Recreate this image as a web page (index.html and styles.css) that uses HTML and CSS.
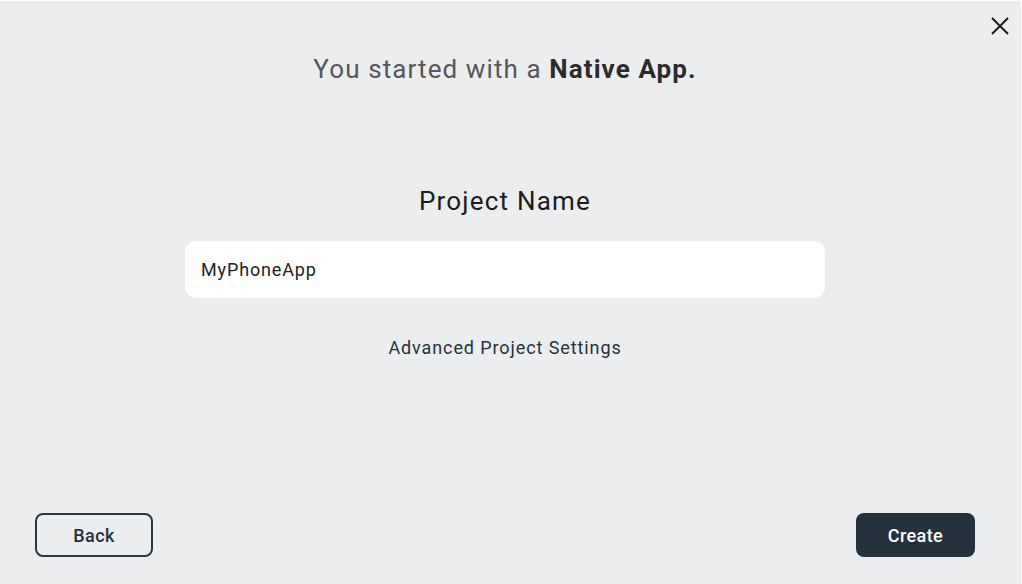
FILE: index.html
```html
<!DOCTYPE html>
<html>
<head>
<meta charset="utf-8">
<link rel="stylesheet" href="styles.css">
</head>
<body>
<div class="dialog">
  <button class="close" aria-label="Close">
    <svg width="20" height="20" viewBox="0 0 20 20"><path d="M2 2 L18 18 M18 2 L2 18" stroke="#1b1b1b" stroke-width="2" fill="none"/></svg>
  </button>
  <h1 class="title">You started with a <strong>Native App.</strong></h1>
  <div class="form">
    <h2 class="label">Project Name</h2>
    <div class="input">MyPhoneApp</div>
    <a class="advanced">Advanced Project Settings</a>
  </div>
  <div class="footer">
    <button class="btn btn-back">Back</button>
    <button class="btn btn-create">Create</button>
  </div>
</div>
</body>
</html>
```
FILE: styles.css
```css
* { box-sizing: border-box; }
html, body { margin: 0; padding: 0; }
body {
  width: 1022px;
  height: 584px;
  background: #ffffff;
  font-family: Roboto, "Liberation Sans", sans-serif;
  overflow: hidden;
}
.dialog {
  position: relative;
  width: 1021px;
  height: 584px;
  margin-top: 1px;
  padding-right: 11px;
  background: #ecedef;
  display: flex;
  flex-direction: column;
  align-items: center;
}
.close {
  position: absolute;
  top: 15px;
  right: 11px;
  width: 20px;
  height: 20px;
  padding: 0;
  border: none;
  background: none;
}
.close svg { display: block; }
.title {
  margin: 50px 0 0;
  font-size: 26px;
  font-weight: 400;
  line-height: 36px;
  color: #555759;
  letter-spacing: 1.1px;
}
.title strong { font-weight: 700; color: #2b2b2b; }
.form {
  margin-top: 96px;
  display: flex;
  flex-direction: column;
  align-items: center;
}
.label {
  margin: 0;
  font-size: 26px;
  font-weight: 400;
  line-height: 36px;
  color: #1c1c1c;
  letter-spacing: 1.2px;
}
.input {
  margin-top: 22px;
  width: 640px;
  height: 57px;
  background: #fff;
  border-radius: 11px;
  padding: 0 16px;
  display: flex;
  align-items: center;
  font-size: 18px;
  color: #222;
  letter-spacing: 0.85px;
}
.advanced {
  margin-top: 38px;
  font-size: 18px;
  line-height: 24px;
  color: #26313c;
  letter-spacing: 0.9px;
}
.footer {
  margin-top: auto;
  margin-bottom: 28px;
  width: 1021px;
  margin-right: -11px;
  padding: 0 46px 0 35px;
  display: flex;
  justify-content: space-between;
}
.btn {
  height: 44px;
  border-radius: 8px;
  font-family: Roboto, "Liberation Sans", sans-serif;
  font-size: 18px;
  font-weight: 500;
  letter-spacing: 0.4px;
  padding: 0;
}
.btn-back {
  width: 118px;
  border: 2px solid #2c3741;
  background: transparent;
  color: #26313c;
}
.btn-create {
  width: 119px;
  border: none;
  background: #25323d;
  color: #fff;
}
```
